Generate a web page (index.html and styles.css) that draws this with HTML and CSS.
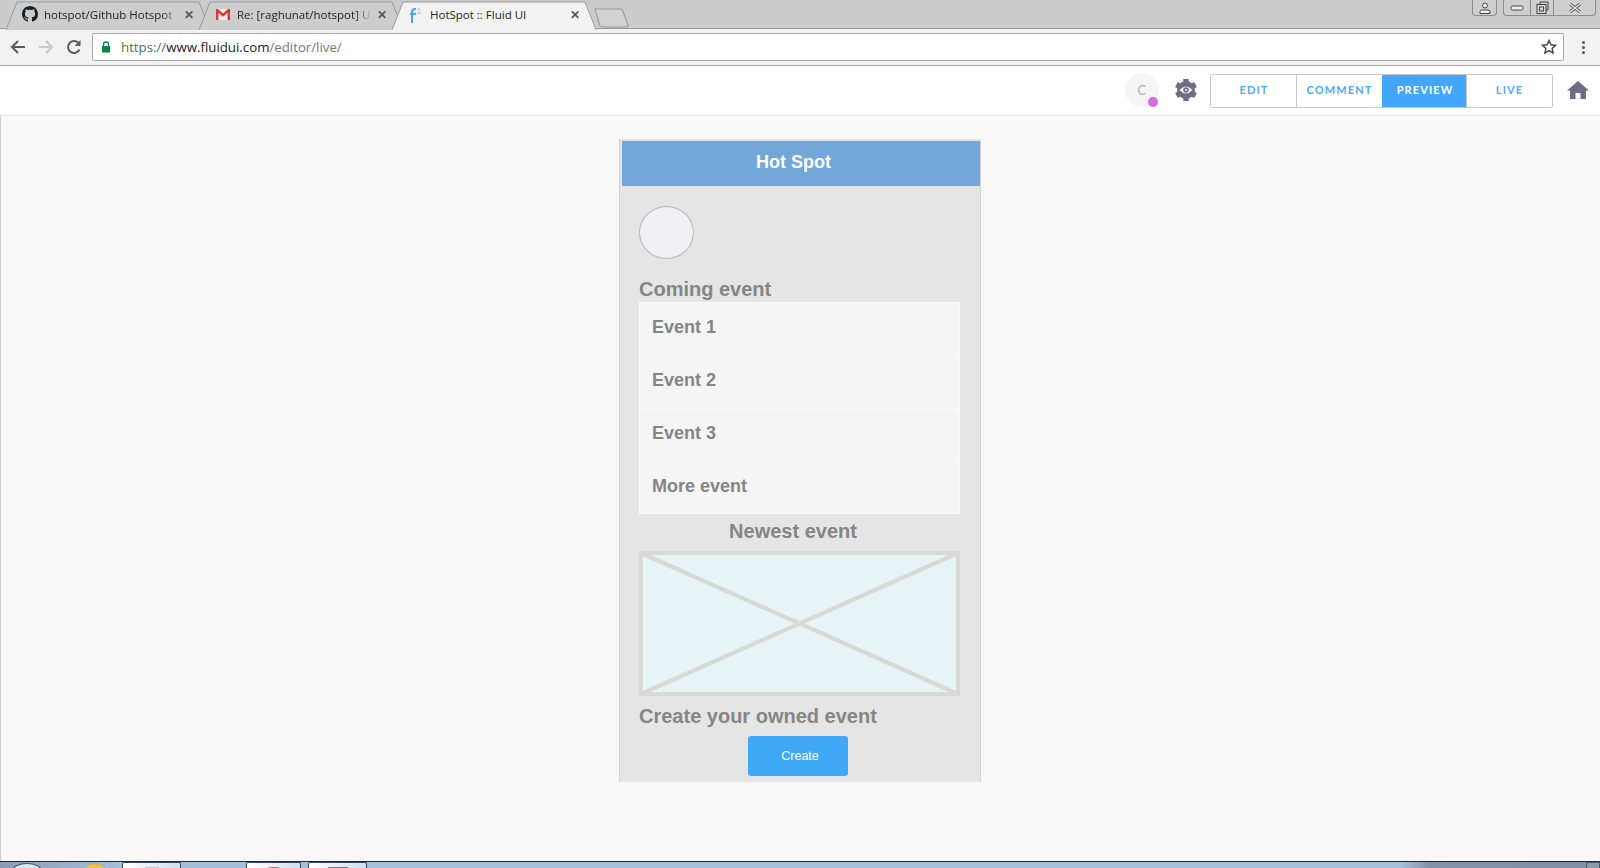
FILE: index.html
```html
<!DOCTYPE html>
<html lang="en">
<head>
<meta charset="utf-8">
<title>HotSpot :: Fluid UI</title>
<link rel="stylesheet" href="styles.css">
</head>
<body>
<div class="page">
  <div class="tabstrip">
    <div class="tab">
      <svg class="tab-shape" viewBox="0 0 204 29"><path d="M0 29 L11 1 H193 L204 29" fill="#cdcdcd" stroke="#9b9b9b"/></svg>
      <svg class="favicon" viewBox="0 0 16 16"><path fill="#1b1f23" d="M8 0C3.58 0 0 3.58 0 8c0 3.54 2.29 6.53 5.47 7.59.4.07.55-.17.55-.38 0-.19-.01-.82-.01-1.49-2.01.37-2.53-.49-2.69-.94-.09-.23-.48-.94-.82-1.13-.28-.15-.68-.52-.01-.53.63-.01 1.08.58 1.23.82.72 1.21 1.87.87 2.33.66.07-.52.28-.87.51-1.07-1.78-.2-3.64-.89-3.64-3.95 0-.87.31-1.59.82-2.15-.08-.2-.36-1.02.08-2.12 0 0 .67-.21 2.2.82.64-.18 1.32-.27 2-.27s1.36.09 2 .27c1.53-1.04 2.2-.82 2.2-.82.44 1.1.16 1.92.08 2.12.51.56.82 1.27.82 2.15 0 3.07-1.87 3.75-3.65 3.95.29.25.54.73.54 1.48 0 1.07-.01 1.93-.01 2.2 0 .21.15.46.55.38A8.01 8.01 0 0 0 16 8c0-4.42-3.58-8-8-8z"/></svg>
      <span class="tab-title tab-title-fade">hotspot/Github Hotspot</span>
      <span class="tab-close">✕</span>
    </div>
    <div class="tab">
      <svg class="tab-shape" viewBox="0 0 204 29"><path d="M0 29 L11 1 H193 L204 29" fill="#cdcdcd" stroke="#9b9b9b"/></svg>
      <svg class="favicon" viewBox="0 0 16 16"><path fill="#eee" d="M1 3h14v11H1z"/><path fill="#d93a2f" d="M1 3h2l5 4.500L13 3h2v11h-2.400V6.800L8 10.800 3.400 6.800V14H1z"/></svg>
      <span class="tab-title tab-title-fade">Re: [raghunat/hotspot] U</span>
      <span class="tab-close">✕</span>
    </div>
    <div class="tab tab-active">
      <svg class="tab-shape" viewBox="0 0 204 29"><path d="M0 29 L11 1 H193 L204 29" fill="#f2f2f2" stroke="#9b9b9b"/></svg>
      <svg class="favicon favicon-fluid" viewBox="0 0 16 16"><path fill="none" stroke="#4aa5ee" stroke-width="2" d="M5 16V5q0-3 3-3h1M3 7h6"/><circle cx="12" cy="2.500" r="1" fill="none" stroke="#7fc0f2" stroke-width=".7"/><circle cx="12" cy="6" r="1" fill="none" stroke="#7fc0f2" stroke-width=".7"/></svg>
      <span class="tab-title">HotSpot :: Fluid UI</span>
      <span class="tab-close">✕</span>
    </div>
    <svg class="newtab" viewBox="0 0 34 20" preserveAspectRatio="none"><path d="M1 1 H26 Q27 1 28 3 L33 17 Q33 19 31 19 H8 Q6 19 5.500 17 Z" fill="#d2d2d2" stroke="#999"/></svg>
    <div class="winbtns">
      <div class="winbtn-profile">
        <svg viewBox="0 0 14 12" width="14" height="12"><circle cx="7" cy="3.500" r="2.500" fill="#eee" stroke="#444"/><path d="M2 11.500V9.500q0-1.500 2-1.500h6q2 0 2 1.500v2z" fill="#eee" stroke="#444"/></svg>
      </div>
      <div class="winbtn-group">
        <div class="winbtn-cell winbtn-min"><svg viewBox="0 0 14 6" width="14" height="6"><rect x="1" y="1" width="12" height="4" rx="1.500" fill="#eee" stroke="#444"/></svg></div>
        <div class="winbtn-cell winbtn-max"><svg viewBox="0 0 13 13" width="13" height="13"><path d="M4 3V1h8v8h-2" fill="none" stroke="#444"/><rect x="1" y="3.500" width="9" height="9" fill="#d8d8d8" stroke="#444"/><rect x="3.500" y="6" width="4" height="4" fill="none" stroke="#444"/></svg></div>
        <div class="winbtn-cell winbtn-close"><svg viewBox="0 0 14 10" width="14" height="10"><path d="M2 1 L12 9 M12 1 L2 9" stroke="#555" stroke-width="3" fill="none"/><path d="M2 1 L12 9 M12 1 L2 9" stroke="#ececec" stroke-width="1.200" fill="none"/></svg></div>
      </div>
    </div>
  </div>

  <div class="toolbar">
    <svg class="nav-icon" viewBox="0 0 16 16"><path d="M15 8H2M8 2 2 8l6 6" fill="none" stroke="#5a5a5a" stroke-width="2"/></svg>
    <svg class="nav-icon" viewBox="0 0 16 16"><path d="M1 8h13M8 2l6 6-6 6" fill="none" stroke="#c9c9c9" stroke-width="2"/></svg>
    <svg class="nav-icon" viewBox="0 0 16 16"><path d="M13.500 10.500A6 6 0 1 1 12.300 3.800" fill="none" stroke="#5a5a5a" stroke-width="2"/><path d="M14.500 1v6h-6z" fill="#5a5a5a"/></svg>
    <div class="omnibox">
      <svg class="lock" viewBox="0 0 10 12"><path d="M2.500 5V3.500a2.500 2.500 0 0 1 5 0V5" fill="none" stroke="#0b8043" stroke-width="1.300"/><rect x="1" y="5" width="8" height="6.500" fill="#0b8043"/></svg>
      <span class="url"><span class="url-scheme">https://</span>www.fluidui.com<span class="url-path">/editor/live/</span></span>
      <svg class="star" viewBox="0 0 16 16"><path d="M8 1.500l1.900 4.300 4.600.5-3.400 3.100 1 4.600L8 11.600 3.900 14l1-4.600L1.500 6.300l4.600-.5z" fill="none" stroke="#444" stroke-width="1.400"/></svg>
    </div>
    <div class="kebab"><i></i><i></i><i></i></div>
  </div>

  <header class="appbar">
    <div class="avatar">C<span class="avatar-dot"></span></div>
    <svg class="gear" viewBox="0 0 24 24"><circle cx="12" cy="12" r="9" fill="#6f6d84"/><g stroke="#6f6d84" stroke-width="5.500"><path d="M12 1v22"/><path d="M2.500 6.500l19 11"/><path d="M21.500 6.500l-19 11"/></g><path fill="#fff" d="M5.500 12q6.500-7 13 0-6.500 7-13 0z"/><circle cx="12" cy="12" r="2.800" fill="#6f6d84"/><circle cx="12" cy="12" r="1.100" fill="#fff"/></svg>
    <nav class="modes">
      <span class="mode mode-edit">EDIT</span>
      <span class="mode mode-comment">COMMENT</span>
      <span class="mode mode-on">PREVIEW</span>
      <span class="mode mode-live">LIVE</span>
    </nav>
    <svg class="home" viewBox="0 0 22 18" preserveAspectRatio="none"><path fill="#6f6d84" d="M11 0 22 9.500h-3V18h-5.500v-6h-5v6H3V9.500H0z"/></svg>
  </header>

  <main class="canvas">
    <section class="phone">
      <div class="phone-head">Hot Spot</div>
      <div class="phone-body">
        <div class="photo"></div>
        <h2 class="label label-coming">Coming event</h2>
        <ul class="events">
          <li>Event 1</li>
          <li>Event 2</li>
          <li>Event 3</li>
          <li>More event</li>
        </ul>
        <h2 class="label label-newest">Newest event</h2>
        <svg class="placeholder" viewBox="0 0 321 145" preserveAspectRatio="none"><rect x="2" y="2" width="317" height="141" fill="#e6f4f5" stroke="#d8d8d8" stroke-width="4"/><path d="M2 2 319 143M319 2 2 143" stroke="#d8d8d8" stroke-width="4.200"/></svg>
        <h2 class="label label-create">Create your owned event</h2>
        <button class="create">Create</button>
      </div>
    </section>
  </main>

  <footer class="taskbar">
    <div class="task-orb"></div>
    <div class="task-ie"></div>
    <div class="task-btn task-folder"><i></i></div>
    <div class="task-btn task-chrome"><i></i></div>
    <div class="task-btn task-other"><i></i></div>
    <div class="task-show"></div>
  </footer>
</div>
</body>
</html>
```

FILE: styles.css
```css
* { box-sizing: border-box; }
html, body { margin: 0; padding: 0; height: 100%; overflow: hidden; }
body { font-family: "Liberation Sans", Arial, sans-serif; background: #f8f8f8; }
svg { display: block; flex: none; }

.page { width: 1600px; height: 868px; display: flex; flex-direction: column; }

/* browser tabs */
.tabstrip {
  height: 29px; flex: none; display: flex; align-items: flex-end;
  padding-left: 6px; background: #cbcbcb; border-bottom: 1px solid #9b9b9b;
}
.tab {
  position: relative; width: 204px; height: 28px; margin-right: -11px; margin-bottom: -1px;
  display: flex; align-items: center; padding: 0 16px 2px 15px;
  font-family: "Open Sans", sans-serif; font-size: 11.5px; color: #333;
}
.tab-shape { position: absolute; left: 0; top: 0; width: 100%; height: 29px; }
.favicon { position: relative; width: 16px; height: 16px; margin-left: 1px; margin-right: 6px; }
.favicon-fluid { margin-top: 1px; margin-left: 0; margin-right: 7px; }
.tab-title { position: relative; flex: 1; white-space: nowrap; overflow: hidden; color: #222; }
.tab-title-fade { -webkit-mask-image: linear-gradient(90deg, #000 86%, transparent 100%); mask-image: linear-gradient(90deg, #000 86%, transparent 100%); padding-right: 3px; }
.tab-close { position: relative; font-size: 12px; font-weight: 700; color: #555; margin-left: 4px; }
.newtab { width: 35px; height: 20px; margin-left: 9px; }

.winbtns { margin-left: auto; align-self: flex-start; display: flex; gap: 6px; padding-right: 4px; }
.winbtn-profile, .winbtn-group {
  height: 16px; border: 1px solid #8c8c8c; border-top: 0; border-radius: 0 0 4px 4px;
  display: flex; align-items: center; justify-content: center; background: #cfcfcf;
}
.winbtn-profile { width: 25px; }
.winbtn-group { width: 93px; }
.winbtn-cell { height: 100%; display: flex; align-items: center; justify-content: center; }
.winbtn-min { width: 27px; border-right: 1px solid #8c8c8c; }
.winbtn-max { width: 23px; border-right: 1px solid #8c8c8c; }
.winbtn-close { flex: 1; }

/* browser toolbar */
.toolbar {
  height: 37px; flex: none; display: flex; align-items: center; gap: 12px;
  padding: 0 15px 0 10px; background: #f2f2f2; border-bottom: 1px solid #a8a8a8;
}
.nav-icon { width: 16px; height: 16px; }
.omnibox {
  flex: 1; height: 28px; margin-left: -2px; display: flex; align-items: center;
  background: #fff; border: 1px solid #a9a9a9; border-radius: 2px; padding: 0 6px 0 8px;
}
.lock { width: 10px; height: 12px; margin-right: 10px; }
.url { flex: 1; font-family: "Open Sans", sans-serif; font-size: 13.25px; color: #222; }
.url-scheme { color: #3c7a55; }
.url-path { color: #777; }
.star { width: 16px; height: 16px; }
.kebab { display: flex; flex-direction: column; gap: 2px; width: 3px; margin-left: 6px; }
.kebab i { display: block; width: 3px; height: 3px; background: #555; border-radius: 50%; }

/* app header */
.appbar {
  height: 50px; flex: none; display: flex; align-items: center; justify-content: flex-end;
  padding: 0 11px 2px 0; background: #fff; border-bottom: 1px solid #e3e3e3;
}
.avatar {
  position: relative; width: 34px; height: 34px; border-radius: 50%; background: #f5f5f5;
  color: #aaa; font-family: Lato, sans-serif; font-size: 13px; padding-right: 1px;
  display: flex; align-items: center; justify-content: center;
}
.avatar-dot {
  position: absolute; right: 1px; bottom: 0; width: 10px; height: 10px; border-radius: 50%; background: #d966e8;
}
.gear { width: 24px; height: 24px; margin: 0 12px 0 15px; }
.modes {
  display: flex; height: 34px; margin-top: 2px; border: 1px solid #c8c8c8; border-radius: 2px;
  font-family: Lato, sans-serif; font-size: 11px; font-weight: 700; letter-spacing: 1.1px; color: #4da8ff;
}
.mode { display: flex; align-items: center; justify-content: center; width: 85px; border-left: 1px solid #c8c8c8; padding-bottom: 3px; }
.mode-edit { border-left: 0; padding-left: 1px; }
.mode-comment { width: 86px; }
.mode-on { width: 84px; padding-left: 2px; background: #42a7fb; color: #fff; border-left: 0; }
.mode-live { width: 86px; }
.home { width: 22px; height: 18px; margin-left: 14px; margin-top: 1px; }

/* page canvas */
.canvas {
  flex: 1; min-height: 0; display: flex; justify-content: flex-start; align-items: flex-start;
  padding: 23px 0 0 618px; background: #f8f8f8; border-left: 1px solid #d0d0d0;
}
.phone {
  width: 362px; height: 643px; display: flex; flex-direction: column;
  background: #e5e5e5; border-right: 1px solid #d2d2d2; border-left: 1px solid #d2d2d2; border-top: 2px solid #e2e2e2; padding-left: 2px;
}
.phone-head {
  height: 45px; flex: none; display: flex; align-items: center; justify-content: center;
  padding: 0 15px 2px 0; background: #72a7da; color: #fff; font-size: 18px; font-weight: 700;
}
.phone-body { flex: 1; display: flex; flex-direction: column; align-items: flex-start; padding: 20px 0 0 17px; }
.photo { width: 55px; height: 53px; border-radius: 50%; background: #f0f0f2; border: 1px solid #b9b9bd; }
.label { margin: 0; font-size: 20px; line-height: 24px; font-weight: 700; color: #858585; }
.label-coming { margin-top: 18px; margin-bottom: 1px; }
.events { width: 321px; margin: 0; padding: 0; list-style: none; background: #f5f5f5; border: 1px solid #fafafa; }
.events li {
  height: 53px; padding: 0 12px 3px; display: flex; align-items: center;
  font-size: 18px; font-weight: 700; color: #858585; border-bottom: 1px solid #fafafa;
}
.events li:last-child { height: 51px; border-bottom: 0; }
.label-newest { width: 321px; margin-top: 5px; margin-bottom: 8px; padding-right: 13px; text-align: center; }
.placeholder { width: 321px; height: 145px; }
.label-create { margin-top: 8px; }
.create {
  width: 100px; height: 40px; margin: 8px 0 0 109px; border: 0; border-radius: 3px;
  background: #3fa9f7; color: #fff; font: 12.5px "Liberation Sans", Arial, sans-serif; padding: 0 0 0 4px;
}

/* windows taskbar */
.taskbar {
  height: 7px; flex: none; display: flex; align-items: flex-start; overflow: hidden;
  border-top: 1px solid #1c2530;
  background: linear-gradient(90deg, #8b9db3 0, #a4bfdb 120px, #a7c1dd 1400px, #8093a8 1430px, #7d90a6 100%);
}
.task-orb { width: 30px; height: 16px; margin: 1px 0 0 12px; border: 1px solid #3a5a76; border-radius: 50%; background: #dbe6ee; }
.task-ie { width: 20px; height: 10px; margin: 1px 0 0 43px; border-radius: 50%; background: #f0c52e; border: 1px solid #7fb2dc; }
.task-btn {
  width: 59px; height: 10px; display: flex; justify-content: center; background: linear-gradient(90deg, #fff, #cfdfee);
  border: 1px solid #35465a; border-bottom: 0; border-radius: 2px 2px 0 0;
}
.task-btn i { display: block; width: 20px; height: 8px; margin-top: 4px; }
.task-folder { margin-left: 17px; }
.task-folder i { width: 14px; background: #e2ca88; }
.task-chrome { width: 55px; margin-left: 65px; }
.task-chrome i { border-radius: 50% 50% 0 0; background: #df4a3c; }
.task-other { margin-left: 7px; }
.task-other i { background: #777; }
.task-show { width: 14px; height: 7px; margin-left: auto; border: 1px solid #4a5a6a; background: #8a9bad; }
```
